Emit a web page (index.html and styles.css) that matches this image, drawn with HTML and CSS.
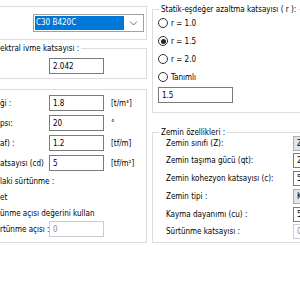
FILE: index.html
```html
<!doctype html>
<html>
<head>
<meta charset="utf-8">
<title>Yapı parametreleri</title>
<link rel="stylesheet" href="styles.css">
</head>
<body>
  <div class="form">
    <div class="col col-left">
      <div class="box box-concrete">
        <div class="combo">
          <span class="combo-sel">C30 B420C</span>
          <svg class="combo-arrow" width="9" height="6" viewBox="0 0 9 6"><path d="M1 1.5 L4.5 5 L8 1.5" fill="none" stroke="#707070" stroke-width="1"/></svg>
        </div>
      </div>

      <div class="box box-spectral">
        <span class="box-title cut">ektral ivme katsayısı :</span>
        <input class="field" type="text" value="2.042">
      </div>

      <div class="box box-soil">
        <div class="rows">
          <span class="lbl">ği :</span><input class="field" type="text" value="1.8"><span class="unit">[t/m³]</span>
          <span class="lbl">psı:</span><input class="field" type="text" value="20"><span class="unit">°</span>
          <span class="lbl">af) :</span><input class="field" type="text" value="1.2"><span class="unit">[tf/m]</span>
          <span class="lbl">atsayısı (cd)</span><input class="field" type="text" value="5"><span class="unit">[tf/m²]</span>
        </div>
        <div class="line">laki sürtünme :</div>
        <div class="line">et</div>
        <div class="line">ünme açısı değerini kullan</div>
        <div class="line">
          <span class="lbl-wide">rtünme açısı :</span>
          <input class="field off" type="text" value="0" disabled>
        </div>
      </div>
    </div>

    <div class="col col-right">
      <div class="box box-r">
        <span class="box-title">Statik-eşdeğer azaltma katsayısı ( r ):</span>
        <label class="radio"><span class="dot"></span>r = 1.0</label>
        <label class="radio"><span class="dot on"></span>r = 1.5</label>
        <label class="radio"><span class="dot"></span>r = 2.0</label>
        <label class="radio"><span class="dot"></span>Tanımlı</label>
        <input class="field field-r" type="text" value="1.5">
      </div>

      <div class="box box-zemin">
        <span class="box-title">Zemin özellikleri :</span>
        <div class="zrows">
          <span>Zemin sınıfı (Z):</span><input class="field gray" type="text" value="ZB">
          <span>Zemin taşıma gücü (qt):</span><input class="field" type="text" value="20">
          <span>Zemin kohezyon katsayısı (c):</span><input class="field" type="text" value="5">
          <span>Zemin tipi :</span><input class="field gray" type="text" value="Kohezyonlu">
          <span>Kayma dayanımı (cu) :</span><input class="field" type="text" value="5">
          <span>Sürtünme katsayısı :</span><input class="field off" type="text" value="0" disabled>
        </div>
      </div>
    </div>
  </div>
</body>
</html>
```

FILE: styles.css
```css
html, body{
  margin: 0;
  background: #fff;
  overflow: hidden;
}
body{
  font-family: "DejaVu Sans Condensed", "DejaVu Sans", sans-serif;
  font-size: 8px;
  color: #000;
  width: 300px;
  height: 300px;
}
.form{
  display: grid;
  grid-template-columns: 147px 220px;
  column-gap: 5px;
}
.col{
  display: flex;
  flex-direction: column;
}
.box{
  position: relative;
  border: 1px solid #dcdcdc;
  box-sizing: border-box;
}
.col-left .box{
  border-left: none;
}
.box-title{
  position: absolute;
  top: -6px;
  left: 6px;
  line-height: 11px;
  padding: 0 2px;
  background: #fff;
  white-space: nowrap;
}
.box-title.cut{
  left: 0;
  padding-left: 0;
}

.field{
  box-sizing: border-box;
  height: 16px;
  width: 55px;
  border: 1px solid #7a7a7a;
  background: #fff;
  font: inherit;
  color: #000;
  padding: 0 0 0 3px;
  margin: 0;
  outline: none;
}
.field.off{
  border-color: #cccccc;
  color: #8a8a8a;
}
.field.gray{
  background: #e5e5e5;
  border-color: #adadad;
}

/* beton sınıfı */
.box-concrete{
  margin-top: 6px;
  height: 34px;
  padding: 7px 2px 0 33px;
}
.combo{
  display: flex;
  align-items: center;
  height: 18px;
  box-sizing: border-box;
  border: 1px solid #a0a0a0;
  padding: 1px;
}
.combo-sel{
  flex: 1;
  height: 14px;
  line-height: 14px;
  background: #0078d7;
  color: #fff;
  padding-left: 1px;
}
.combo-arrow{
  margin: 0 4px 0 5px;
}

.box-spectral{
  margin-top: 8px;
  height: 31px;
  padding: 9px 0 0 49px;
}

.box-soil{
  margin-top: 10px;
  height: 154px;
  padding-top: 5px;
}
.rows{
  display: grid;
  grid-template-columns: 49px 55px auto;
  grid-auto-rows: 16px;
  row-gap: 4px;
  align-items: center;
}
.unit{
  padding-left: 7px;
}
.lbl, .lbl-wide{
  white-space: nowrap;
}
.line{
  display: flex;
  align-items: center;
  height: 16px;
  white-space: nowrap;
}
.rows + .line{
  margin-top: 2px;
}
.lbl-wide{
  width: 49px;
}

/* sağ taraf */
.box-r{
  margin-top: 9px;
  height: 104px;
  padding: 5px 0 0 5px;
  display: flex;
  flex-direction: column;
  align-items: flex-start;
  gap: 2px;
}
.radio{
  display: flex;
  align-items: center;
  height: 16px;
  gap: 3px;
}
.dot{
  width: 10px;
  height: 10px;
  box-sizing: border-box;
  border: 1px solid #333;
  border-radius: 50%;
  display: flex;
  align-items: center;
  justify-content: center;
}
.dot.on::after{
  content: "";
  width: 5px;
  height: 5px;
  border-radius: 50%;
  background: #222;
}
.field-r{
  width: 75px;
  margin-top: 0;
}

.box-zemin{
  margin-top: 19px;
  height: 111px;
  padding: 2px 0 0 13px;
}
.zrows{
  display: grid;
  grid-template-columns: 127px 60px;
  grid-auto-rows: 16px;
  row-gap: 1.75px;
  align-items: center;
  white-space: nowrap;
}
.zrows .field{
  height: 15px;
}
```
